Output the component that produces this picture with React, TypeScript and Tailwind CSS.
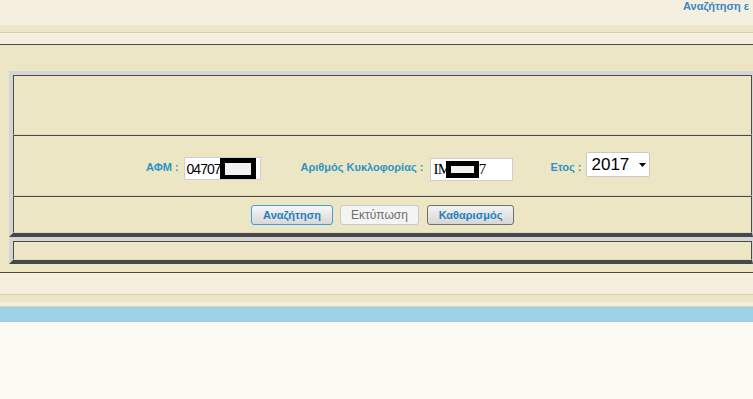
import React from "react";

function Redact({ w, h, className = "" }: { w: number; h: number; className?: string }) {
  return (
    <span
      className={`inline-flex items-center justify-center bg-black shrink-0 ${className}`}
      style={{ width: w, height: h }}
    >
      <span className="block bg-[#f2f2f2]" style={{ width: w - 10, height: h - 10 }} />
    </span>
  );
}

export default function App() {
  const cellBorder =
    "border-t border-l border-r border-b border-t-[#4a4a4a] border-l-[#4a4a4a] border-r-[#4a4a4a] border-b-[#ddd9c8]";
  const outer =
    "ml-[9px] w-[744px] border-t-4 border-l-4 border-b-4 border-r border-t-[#d5d5d5] border-l-[#d5d5d5] border-b-[#484848] border-r-[#d5d5d5]";
  return (
    <div className="w-[753px] h-[399px] overflow-hidden bg-[#fafaf3] font-['Liberation_Sans',Arial,sans-serif]">
      <div className="h-[25px] bg-[#f5efdf] pl-[683px] overflow-hidden">
        <span className="block whitespace-nowrap text-[11px] leading-[13px] font-bold text-[#3a86c8]">
          Αναζήτηση ε
        </span>
      </div>
      <div className="h-[7px] bg-[#ede6c8]" />
      <div className="h-px bg-[#dccf9f]" />
      <div className="h-[11px] bg-[#f5efdf]" />
      <div className="h-px bg-[#4a4a4a]" />
      <div className="bg-[#ece6c5] pt-[26px] pb-[8px]">
        <div className={outer}>
          <div className={`h-[60px] ${cellBorder}`} />
          <div className={`h-[61px] ${cellBorder} flex items-start pl-[132px]`}>
            <span className="mt-[25px] text-[11px] leading-[13px] font-bold text-[#2a94c6] whitespace-nowrap">
              ΑΦΜ :
            </span>
            <div className="mt-[21px] ml-[5px] w-[77px] h-[23px] bg-white border border-[#cfcfcf] flex items-center pl-[2px] overflow-hidden">
              <span className="whitespace-nowrap text-[14px] tracking-[-1px] text-black leading-[16px]">
                04707
              </span>
              <Redact w={36} h={22} className="-ml-px" />
            </div>
            <span className="mt-[25px] ml-[40px] text-[11px] leading-[13px] font-bold text-[#2a94c6] whitespace-nowrap">
              Αριθμός Κυκλοφορίας :
            </span>
            <div className="mt-[22px] ml-[7px] w-[83px] h-[23px] bg-white border border-[#cfcfcf] flex items-center pl-[2px] overflow-hidden font-['Liberation_Serif',serif]">
              <span className="whitespace-nowrap text-[15px] tracking-[-0.5px] text-black leading-[17px]">
                IM
              </span>
              <Redact w={33} h={17} className="-ml-[5px]" />
              <span className="text-[15px] text-black leading-[17px]">7</span>
            </div>
            <span className="mt-[25px] ml-[37px] text-[11px] leading-[13px] font-bold text-[#2a94c6] whitespace-nowrap">
              Ετος :
            </span>
            <div className="mt-[16px] ml-[5px] w-[64px] h-[25px] bg-white border border-[#c8c8c8] rounded-[2px] flex items-center pl-[4px] pr-[3px]">
              <span className="text-[17px] leading-[20px] text-black">2017</span>
              <svg className="ml-auto" width="7" height="4" viewBox="0 0 7 4">
                <path d="M0 0 H7 L3.5 4 Z" fill="#000" />
              </svg>
            </div>
          </div>
          <div className={`h-[37px] ${cellBorder} flex justify-center items-start pt-[8px]`}>
            <button className="w-[82px] h-[20px] rounded-[3px] border border-[#3c9fdc] bg-gradient-to-b from-[#f6f6f6] to-[#d8d8d8] text-[11px] font-bold text-[#1f7fbf] leading-[18px]">
              Αναζήτηση
            </button>
            <button className="ml-[7px] w-[79px] h-[20px] rounded-[3px] border border-[#c9c9c9] bg-[#f4f4f4] text-[12px] text-[#6d6d6d] leading-[18px]">
              Εκτύπωση
            </button>
            <button className="ml-[8px] w-[87px] h-[20px] rounded-[3px] border border-[#707070] bg-gradient-to-b from-[#f3f3f3] to-[#d6d6d6] text-[11px] font-bold text-[#1f7fbf] leading-[18px]">
              Καθαρισμός
            </button>
          </div>
        </div>
        <div className={outer}>
          <div className={`h-[19px] ${cellBorder}`} />
        </div>
      </div>
      <div className="h-px bg-[#4a4a4a]" />
      <div className="h-[21px] bg-[#f5efdf]" />
      <div className="h-px bg-[#dccf9f]" />
      <div className="h-[7px] bg-[#ebe4c6]" />
      <div className="h-[4px] bg-[#f5efdf]" />
      <div className="h-px bg-[#e0d2a4]" />
      <div className="h-[15px] bg-[#9bd3e7]" />
    </div>
  );
}
